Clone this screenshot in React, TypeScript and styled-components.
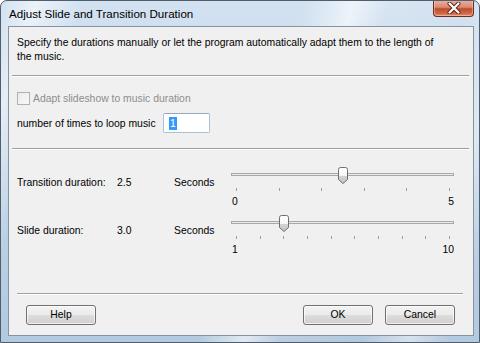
import React from 'react';
import styled, { createGlobalStyle } from 'styled-components';

const Global = createGlobalStyle`
  html, body { margin: 0; padding: 0; background: #ffffff; }
  body { font-family: "Liberation Sans", Arial, sans-serif; }
`;

const Window = styled.div`
  width: 480px;
  height: 343px;
  box-sizing: border-box;
  display: flex;
  flex-direction: column;
  border: 1px solid #4f5d6c;
  border-radius: 7px 7px 0 0;
  padding: 0 5px 6px 7px;
  overflow: hidden;
  background:
    linear-gradient(108deg, rgba(255,255,255,0) 0%, rgba(255,255,255,0.55) 6%, rgba(255,255,255,0) 14%,
      rgba(255,255,255,0) 52%, rgba(255,255,255,0.6) 60%, rgba(255,255,255,0.1) 66%,
      rgba(255,255,255,0) 80%, rgba(255,255,255,0.45) 88%, rgba(255,255,255,0) 95%),
    linear-gradient(180deg, #d3e2f1 0%, #c2d6ea 40%, #b3c9df 100%);
`;

const TitleBar = styled.div`
  height: 25px;
  flex: none;
  display: flex;
  align-items: flex-start;
`;

const Title = styled.div`
  font-family: "Liberation Sans", Arial, sans-serif;
  font-size: 11.6px;
  line-height: 16px;
  color: #000;
  padding-top: 5px;
  padding-left: 1px;
`;

const CloseButton = styled.div`
  margin-left: auto;
  margin-top: -1px;
  width: 41px;
  height: 17px;
  box-sizing: border-box;
  border: 1px solid #6b2e20;
  border-top: none;
  border-radius: 0 0 4px 4px;
  background: linear-gradient(180deg, #e9b3a3 0%, #d98b72 45%, #c04a2c 55%, #cf6b48 85%, #e39470 100%);
  box-shadow: inset 0 0 0 1px rgba(255, 220, 200, 0.45);
  display: flex;
  align-items: center;
  justify-content: center;
`;

const Client = styled.div`
  flex: 1;
  display: flex;
  flex-direction: column;
  border: 1px solid #8793a1;
  background: #f0f0f0;
  font-size: 10.4px;
  color: #000;
`;

const Description = styled.div`
  margin: 9px 0 0 8px;
  line-height: 14px;
  white-space: nowrap;
`;

const Separator = styled.div<{ $top: number; $left: number; $right: number }>`
  margin: ${(p) => p.$top}px ${(p) => p.$right}px 0 ${(p) => p.$left}px;
  height: 1px;
  background: #a0a0a0;
  border-bottom: 1px solid #ffffff;
`;

const CheckRow = styled.div`
  margin: 15px 0 0 8px;
  height: 13px;
  display: flex;
  align-items: center;
  gap: 3px;
  color: #8d8d8d;
  white-space: nowrap;
`;

const CheckBox = styled.div`
  width: 13px;
  height: 13px;
  box-sizing: border-box;
  border: 1px solid #b1b1b1;
  background: linear-gradient(135deg, #ebebeb, #f8f8f8);
`;

const LoopRow = styled.div`
  margin: 8px 0 0 8px;
  height: 20px;
  display: flex;
  align-items: center;
`;

const LoopLabel = styled.span`
  width: 146px;
  white-space: nowrap;
`;

const NumberBox = styled.div`
  width: 47px;
  height: 20px;
  box-sizing: border-box;
  border: 1px solid #a9c1db;
  border-top-color: #8fa9c6;
  border-radius: 2px;
  background: #ffffff;
  display: flex;
  align-items: center;
  padding-left: 5px;
`;

const Selected = styled.span`
  background: #3399ff;
  color: #ffffff;
  line-height: 13px;
  padding: 0 1px;
`;

const SliderRow = styled.div<{ $top: number }>`
  margin: ${(p) => p.$top}px 0 0 8px;
  display: grid;
  grid-template-columns: 100px 57px 57px 223px;
  align-items: start;
  white-space: nowrap;
`;

const RowText = styled.div`
  margin-top: 9px;
  line-height: 14px;
`;

const SliderBox = styled.div`
  display: flex;
  flex-direction: column;
`;

const SliderLabels = styled.div`
  display: flex;
  justify-content: space-between;
  padding-left: 1px;
  line-height: 14px;
`;

const ButtonRow = styled.div`
  margin: 10px 18px 0 17px;
  display: flex;
  gap: 12px;
`;

const Button = styled.div<{ $push?: boolean }>`
  width: 70px;
  height: 20px;
  box-sizing: border-box;
  margin-left: ${(p) => (p.$push ? 'auto' : '0')};
  border: 1px solid #707070;
  border-radius: 3px;
  background: linear-gradient(180deg, #f3f3f3 0%, #ebebeb 48%, #dddddd 52%, #cfcfcf 100%);
  box-shadow: inset 0 0 0 1px rgba(255, 255, 255, 0.7);
  display: flex;
  align-items: center;
  justify-content: center;
  line-height: 14px;
`;

function CloseIcon() {
  return (
    <svg width="14" height="12" viewBox="0 0 14 12">
      <path d="M2.5 1.5 L11.5 10.5 M11.5 1.5 L2.5 10.5" stroke="#5a2418" strokeWidth="4" strokeLinecap="round" />
      <path d="M2.5 1.5 L11.5 10.5 M11.5 1.5 L2.5 10.5" stroke="#ffffff" strokeWidth="2.2" strokeLinecap="round" />
    </svg>
  );
}

function SliderTrack({ ticks, position }: { ticks: number; position: number }) {
  const start = 5;
  const span = 213;
  const cx = start + span * position;
  const tickXs = Array.from({ length: ticks }, (_, i) => Math.round(start + (span * i) / (ticks - 1)) + 0.5);
  const tx = Math.round(cx - 4.5);
  return (
    <svg width="223" height="28" viewBox="0 0 223 28">
      <defs>
        <linearGradient id={`thumb${ticks}`} x1="0" y1="0" x2="0" y2="1">
          <stop offset="0" stopColor="#ffffff" />
          <stop offset="0.55" stopColor="#f4f4f4" />
          <stop offset="0.56" stopColor="#d2d2d2" />
          <stop offset="1" stopColor="#c4c4c4" />
        </linearGradient>
      </defs>
      <rect x="0.5" y="6.5" width="222" height="2" fill="#e9ecee" stroke="#a8a8a8" />
      {tickXs.map((x) => (
        <line key={x} x1={x} y1="21" x2={x} y2="24" stroke="#a0a0a0" strokeWidth="1" />
      ))}
      <g transform={`translate(${tx},0)`}>
        <path
          d="M0.5 2.5 Q0.5 0.5 2.5 0.5 H7.5 Q9.5 0.5 9.5 2.5 V12.5 L5 16.5 L0.5 12.5 Z"
          fill={`url(#thumb${ticks})`}
          stroke="#6e6e6e"
        />
      </g>
    </svg>
  );
}

export default function App() {
  return (
    <>
      <Global />
      <Window>
        <TitleBar>
          <Title>Adjust Slide and Transition Duration</Title>
          <CloseButton>
            <CloseIcon />
          </CloseButton>
        </TitleBar>
        <Client>
          <Description>
            Specify the durations manually or let the program automatically adapt them to the length of
            <br />
            the music.
          </Description>
          <Separator $top={11} $left={3} $right={4} />
          <CheckRow>
            <CheckBox />
            <span>Adapt slideshow to music duration</span>
          </CheckRow>
          <LoopRow>
            <LoopLabel>number of times to loop music</LoopLabel>
            <NumberBox>
              <Selected>1</Selected>
            </NumberBox>
          </LoopRow>
          <Separator $top={15} $left={3} $right={4} />
          <SliderRow $top={17}>
            <RowText>Transition duration:</RowText>
            <RowText>2.5</RowText>
            <RowText>Seconds</RowText>
            <SliderBox>
              <SliderTrack ticks={6} position={0.5} />
              <SliderLabels>
                <span>0</span>
                <span>5</span>
              </SliderLabels>
            </SliderBox>
          </SliderRow>
          <SliderRow $top={6}>
            <RowText>Slide duration:</RowText>
            <RowText>3.0</RowText>
            <RowText>Seconds</RowText>
            <SliderBox>
              <SliderTrack ticks={10} position={2 / 9} />
              <SliderLabels>
                <span>1</span>
                <span>10</span>
              </SliderLabels>
            </SliderBox>
          </SliderRow>
          <Separator $top={36} $left={8} $right={10} />
          <ButtonRow>
            <Button>Help</Button>
            <Button $push>OK</Button>
            <Button>Cancel</Button>
          </ButtonRow>
        </Client>
      </Window>
    </>
  );
}
